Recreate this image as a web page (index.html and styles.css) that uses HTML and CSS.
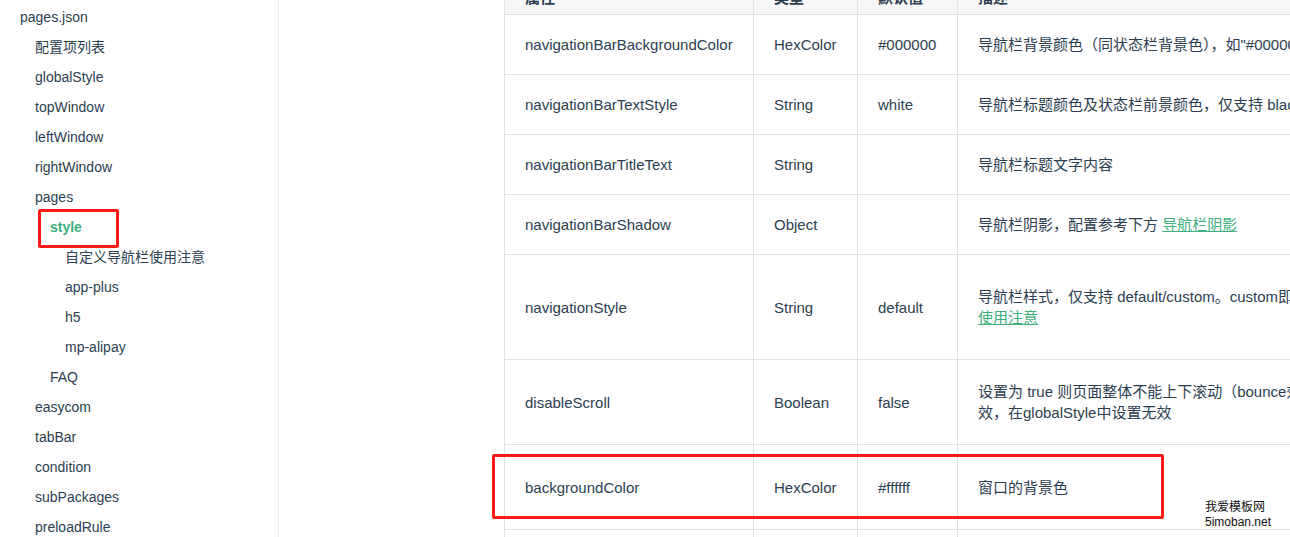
FILE: index.html
```html
<!DOCTYPE html>
<html lang="zh-CN">
<head>
<meta charset="utf-8">
<title>pages.json</title>
<link rel="stylesheet" href="styles.css">
</head>
<body>
<div class="page">
  <aside class="sidebar">
    <ul class="nav">
      <li class="l0">pages.json</li>
      <li class="l1">配置项列表</li>
      <li class="l1">globalStyle</li>
      <li class="l1">topWindow</li>
      <li class="l1">leftWindow</li>
      <li class="l1">rightWindow</li>
      <li class="l1">pages</li>
      <li class="l2 active">style</li>
      <li class="l3">自定义导航栏使用注意</li>
      <li class="l3">app-plus</li>
      <li class="l3">h5</li>
      <li class="l3">mp-alipay</li>
      <li class="l2">FAQ</li>
      <li class="l1">easycom</li>
      <li class="l1">tabBar</li>
      <li class="l1">condition</li>
      <li class="l1">subPackages</li>
      <li class="l1">preloadRule</li>
    </ul>
  </aside>
  <main class="content">
    <table class="props">
      <thead>
        <tr>
          <th class="c-name">属性</th>
          <th class="c-type">类型</th>
          <th class="c-def">默认值</th>
          <th class="c-desc">描述</th>
        </tr>
      </thead>
      <tbody>
        <tr class="r60">
          <td>navigationBarBackgroundColor</td>
          <td>HexColor</td>
          <td>#000000</td>
          <td>导航栏背景颜色（同状态栏背景色），如"#000000"</td>
        </tr>
        <tr class="r60">
          <td>navigationBarTextStyle</td>
          <td>String</td>
          <td>white</td>
          <td>导航栏标题颜色及状态栏前景颜色，仅支持 black/white</td>
        </tr>
        <tr class="r60">
          <td>navigationBarTitleText</td>
          <td>String</td>
          <td></td>
          <td>导航栏标题文字内容</td>
        </tr>
        <tr class="r60">
          <td>navigationBarShadow</td>
          <td>Object</td>
          <td></td>
          <td>导航栏阴影，配置参考下方 <a class="link" href="#">导航栏阴影</a></td>
        </tr>
        <tr class="r105">
          <td>navigationStyle</td>
          <td>String</td>
          <td>default</td>
          <td>导航栏样式，仅支持 default/custom。custom即取消默认的原生导航栏，需看<br><a class="link" href="#">使用注意</a></td>
        </tr>
        <tr class="r85">
          <td>disableScroll</td>
          <td>Boolean</td>
          <td>false</td>
          <td>设置为 true 则页面整体不能上下滚动（bounce效果），只在页面配置中有<br>效，在globalStyle中设置无效</td>
        </tr>
        <tr class="r85">
          <td>backgroundColor</td>
          <td>HexColor</td>
          <td>#ffffff</td>
          <td>窗口的背景色</td>
        </tr>
        <tr class="r60">
          <td>backgroundTextStyle</td>
          <td>String</td>
          <td>dark</td>
          <td>下拉 loading 的样式，仅支持 dark/light</td>
        </tr>
      </tbody>
    </table>
  </main>
  <div class="mark mark-side"></div>
  <div class="mark mark-row"></div>
  <div class="watermark">我爱模板网<br>5imoban.net</div>
</div>
</body>
</html>
```
FILE: styles.css
```css
html, body {
  margin: 0;
  padding: 0;
  background: #fff;
  overflow: hidden;
}
body {
  width: 1290px;
  height: 537px;
  font-family: "Liberation Sans", Arial, "Noto Sans CJK SC", sans-serif;
  color: #2c3e50;
}
.page {
  position: relative;
  display: flex;
  width: 1290px;
  height: 537px;
  overflow: hidden;
}
.sidebar {
  flex: 0 0 278px;
  border-right: 1px solid #eaecef;
  height: 100%;
}
.nav {
  list-style: none;
  margin: 0;
  padding: 2px 0 0 0;
  font-size: 14px;
}
.nav li {
  height: 30px;
  line-height: 30px;
  white-space: nowrap;
  color: #2c3e50;
}
.nav .l0 { padding-left: 20px; }
.nav .l1 { padding-left: 35px; }
.nav .l2 { padding-left: 50px; }
.nav .l3 { padding-left: 65px; }
.nav .active {
  color: #3eaf7c;
  font-weight: bold;
}
.content {
  flex: 1 1 auto;
  padding-left: 225px;
  min-width: 0;
}
.props {
  border-collapse: collapse;
  table-layout: fixed;
  width: 1054px;
  margin-top: -20px;
  font-size: 15px;
}
.props th, .props td {
  border: 1px solid #dfe2e5;
  padding: 0 20px;
  text-align: left;
  vertical-align: middle;
  line-height: 21px;
  white-space: nowrap;
}
.props th {
  height: 33px;
  background: #f7f7f7;
  font-weight: bold;
}
.props .c-name { width: 208px; }
.props .c-type { width: 63px; }
.props .c-def { width: 59px; }
.props .c-desc { width: 560px; }
.props .r60 td { height: 59px; }
.props .r105 td { height: 104px; }
.props .r85 td { height: 84px; }
.link {
  color: #3eaf7c;
  text-decoration: underline;
}
.mark {
  position: absolute;
  border: 3px solid #ff1a1a;
  border-radius: 2px;
  box-sizing: border-box;
}
.mark-side {
  left: 38px;
  top: 209px;
  width: 81px;
  height: 39px;
}
.mark-row {
  left: 492px;
  top: 454px;
  width: 672px;
  height: 65px;
}
.watermark {
  position: absolute;
  left: 1205px;
  top: 500px;
  font-size: 12px;
  line-height: 15px;
  color: #111;
  font-family: "Liberation Sans", "Noto Sans CJK SC", sans-serif;
}
```
